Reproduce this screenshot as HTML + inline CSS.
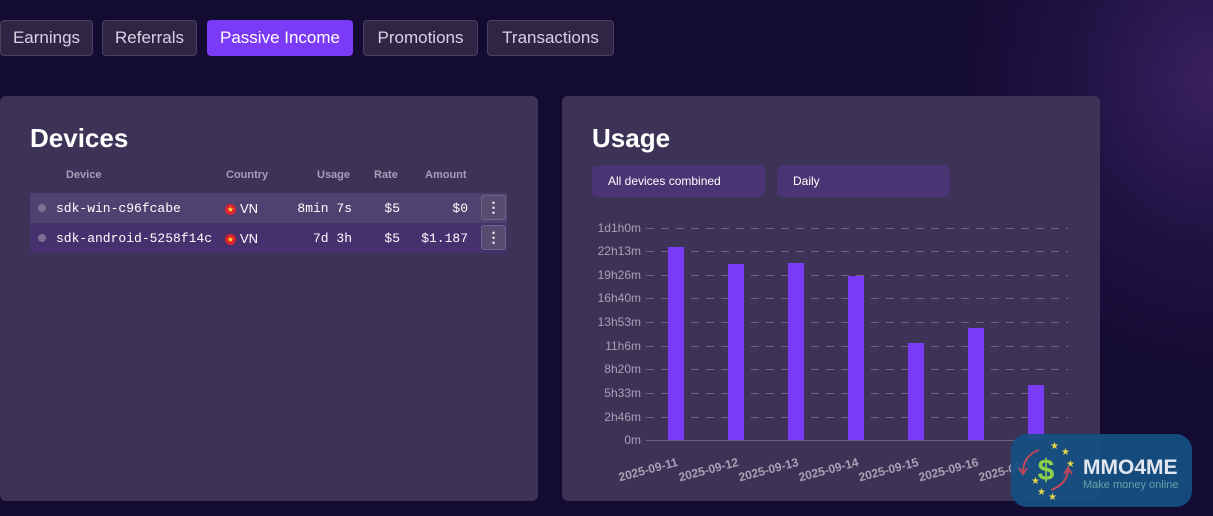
<!DOCTYPE html>
<html><head><style>
*{margin:0;padding:0;box-sizing:border-box}
body{width:1213px;height:516px;overflow:hidden;background:radial-gradient(ellipse 260px 300px at 1213px 80px,#3a2160 0%,#1f1242 55%,#140b33 100%),#120a30;font-family:"Liberation Sans",sans-serif;position:relative;color:#fff}
.tab{position:absolute;top:20px;height:36px;border:1px solid #4a4160;background:#2f2646;border-radius:4px;color:#d8d3e4;font-size:17px;line-height:34px;text-align:center}
.tab.a{background:#7b3af5;border-color:#7b3af5;color:#fff}
.panel{position:absolute;top:96px;height:405px;background:#3d3356;border-radius:6px}
h2{position:absolute;font-size:26px;font-weight:bold;color:#fff}
.th{position:absolute;top:169px;font-size:11px;font-weight:bold;color:#a69fb8}
.row{position:absolute;left:30px;width:477px;height:30px;font-family:"Liberation Mono",monospace;font-size:13px;color:#fff}
.row span{position:absolute;top:8px}
.dot{position:absolute;left:8px;top:11px;width:8px;height:8px;border-radius:50%;background:#7a7290}
.flag{display:inline-block;width:11px;height:11px;border-radius:50%;background:#d9242b;color:#ffd83a;font-size:8px;line-height:11px;text-align:center;vertical-align:1px;margin-right:4px;font-family:"DejaVu Sans",sans-serif}
.more{position:absolute;right:1px;top:2px;width:25px;height:25px;border:1px solid #6d6585;background:#564c70;border-radius:3px;text-align:center;line-height:22px;font-weight:bold;font-family:"Liberation Sans";font-size:14px}
.sel{position:absolute;top:165px;height:32px;background:#4a3473;border-radius:5px;font-size:12px;line-height:32px;padding-left:16px;color:#fff}
.yl{position:absolute;width:60px;left:581px;text-align:right;font-size:12px;color:#a8a2b6}
.gl{position:absolute;left:646px;width:422px;height:1px;background:repeating-linear-gradient(90deg,#6b6380 0 8px,transparent 8px 15px)}
.bar{position:absolute;width:16px;background:#7b3af5;bottom:76px}
.xl{position:absolute;top:455px;font-size:12px;font-weight:bold;color:#a8a2b6;transform:rotate(-15deg);transform-origin:right top}
</style></head><body>
<div class="tab" style="left:0;width:93px">Earnings</div>
<div class="tab" style="left:102px;width:95px">Referrals</div>
<div class="tab a" style="left:207px;width:146px">Passive Income</div>
<div class="tab" style="left:363px;width:115px">Promotions</div>
<div class="tab" style="left:487px;width:127px">Transactions</div>

<div class="panel" style="left:0;width:538px"></div>
<h2 style="left:30px;top:123px">Devices</h2>
<div class="th" style="left:66px">Device</div>
<div class="th" style="left:226px">Country</div>
<div class="th" style="left:317px">Usage</div>
<div class="th" style="left:374px">Rate</div>
<div class="th" style="left:425px">Amount</div>
<div class="row" style="top:193px;background:#4f4270"><i class="dot"></i><span style="left:26px">sdk-win-c96fcabe</span><span style="left:195px;font-family:'Liberation Sans'"><b class="flag">★</b>VN</span><span style="right:155px">8min 7s</span><span style="right:107px">$5</span><span style="right:39px">$0</span><div class="more">⋮</div></div>
<div class="row" style="top:223px;background:#46306e"><i class="dot"></i><span style="left:26px">sdk-android-5258f14c</span><span style="left:195px;font-family:'Liberation Sans'"><b class="flag">★</b>VN</span><span style="right:155px">7d 3h</span><span style="right:107px">$5</span><span style="right:39px">$1.187</span><div class="more">⋮</div></div>

<div class="panel" style="left:562px;width:538px"></div>
<h2 style="left:592px;top:123px">Usage</h2>
<div class="sel" style="left:592px;width:173px">All devices combined</div>
<div class="sel" style="left:777px;width:173px">Daily</div>

<div class="yl" style="top:221px">1d1h0m</div><div class="gl" style="top:228px"></div>
<div class="yl" style="top:244px">22h13m</div><div class="gl" style="top:251px"></div>
<div class="yl" style="top:268px">19h26m</div><div class="gl" style="top:275px"></div>
<div class="yl" style="top:291px">16h40m</div><div class="gl" style="top:298px"></div>
<div class="yl" style="top:315px">13h53m</div><div class="gl" style="top:322px"></div>
<div class="yl" style="top:339px">11h6m</div><div class="gl" style="top:346px"></div>
<div class="yl" style="top:362px">8h20m</div><div class="gl" style="top:369px"></div>
<div class="yl" style="top:386px">5h33m</div><div class="gl" style="top:393px"></div>
<div class="yl" style="top:410px">2h46m</div><div class="gl" style="top:417px"></div>
<div class="yl" style="top:433px">0m</div><div class="gl" style="top:440px;background:#6b6380"></div>

<div class="bar" style="left:668px;top:247px"></div>
<div class="bar" style="left:728px;top:264px"></div>
<div class="bar" style="left:788px;top:263px"></div>
<div class="bar" style="left:848px;top:276px"></div>
<div class="bar" style="left:908px;top:343px"></div>
<div class="bar" style="left:968px;top:328px"></div>
<div class="bar" style="left:1028px;top:385px"></div>

<div class="xl" style="right:537px">2025-09-11</div>
<div class="xl" style="right:477px">2025-09-12</div>
<div class="xl" style="right:417px">2025-09-13</div>
<div class="xl" style="right:357px">2025-09-14</div>
<div class="xl" style="right:297px">2025-09-15</div>
<div class="xl" style="right:237px">2025-09-16</div>
<div class="xl" style="right:177px">2025-09-17</div>

<div style="position:absolute;left:1011px;top:434px;width:181px;height:73px;background:rgba(22,80,130,0.93);border-radius:16px">
<svg width="70" height="73" style="position:absolute;left:0;top:0">
<path d="M28 16 Q12 22 12 38" stroke="#c0485a" stroke-width="2" fill="none"/><path d="M8 34 L12 40 L16 34" stroke="#c0485a" stroke-width="2" fill="none"/>
<path d="M40 56 Q56 50 57 36" stroke="#c0485a" stroke-width="2" fill="none"/><path d="M53 40 L57 34 L61 40" stroke="#c0485a" stroke-width="2" fill="none"/>
<text x="35" y="46" font-family="Liberation Sans" font-weight="bold" font-size="30" fill="#8fd04a" text-anchor="middle">$</text>
<g fill="#e8d24a" font-size="10" font-family="DejaVu Sans"><text x="39" y="15">★</text><text x="50" y="21">★</text><text x="55" y="33">★</text><text x="20" y="50">★</text><text x="26" y="61">★</text><text x="37" y="66">★</text></g>
</svg>
<div style="position:absolute;left:72px;top:22px;font-size:21px;font-weight:bold;color:#e2e6ee">MMO4ME</div>
<div style="position:absolute;left:72px;top:45px;font-size:11px;color:#5fa7a8">Make money online</div>
</div>
</body></html>
